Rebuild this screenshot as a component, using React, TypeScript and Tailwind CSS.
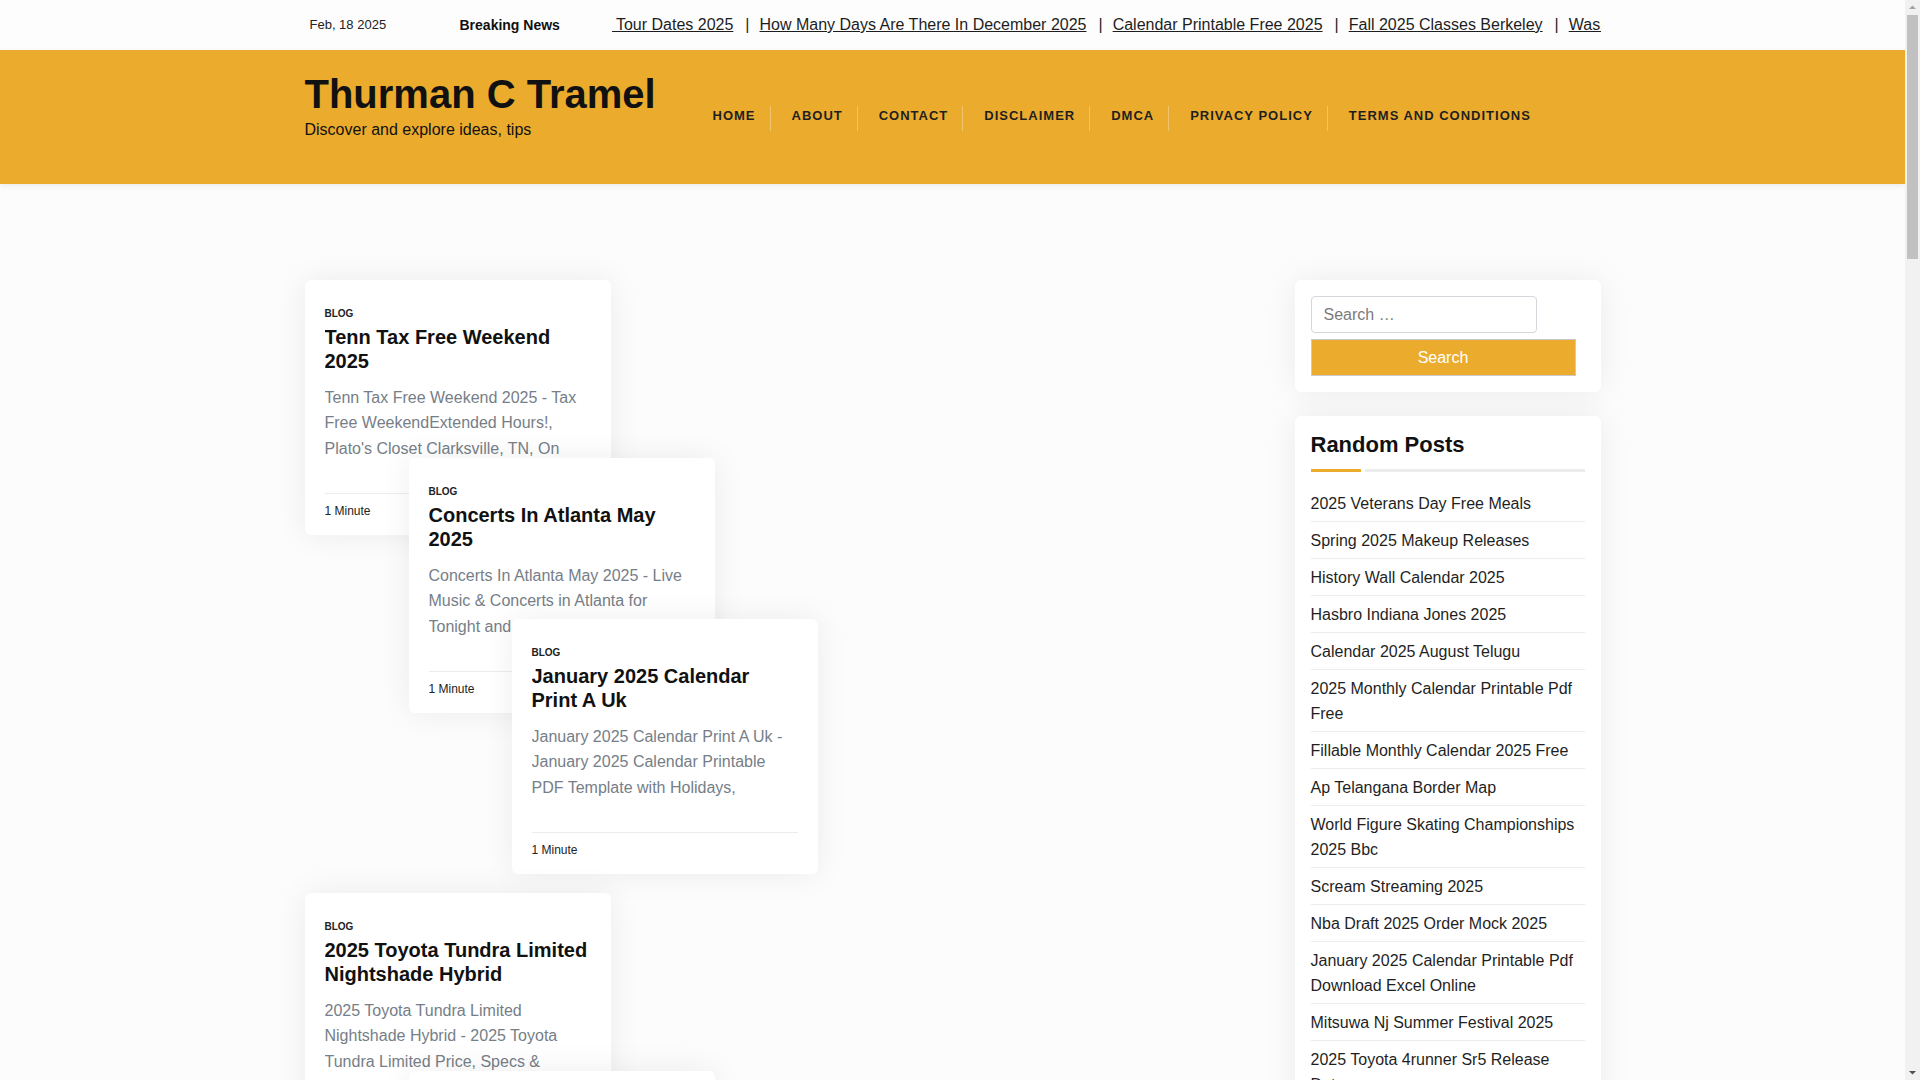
import React from "react";

const tickerItems = [
  "Tour Dates 2025",
  "How Many Days Are There In December 2025",
  "Calendar Printable Free 2025",
  "Fall 2025 Classes Berkeley",
  "Washington Nationals Schedule 2025",
  "Nfl Draft Order 2025 Round 2",
];

const navItems = ["Home", "About", "Contact", "Disclaimer", "DMCA", "Privacy Policy", "Terms and Conditions"];

const posts = [
  {
    title: "Tenn Tax Free Weekend 2025",
    excerpt:
      "Tenn Tax Free Weekend 2025 - Tax Free WeekendExtended Hours!, Plato's Closet Clarksville, TN, On August 1st through the 3rd",
  },
  {
    title: "Concerts In Atlanta May 2025",
    excerpt:
      "Concerts In Atlanta May 2025 - Live Music & Concerts in Atlanta for Tonight and This Weekend, Find tickets",
  },
  {
    title: "January 2025 Calendar Print A Uk",
    excerpt:
      "January 2025 Calendar Print A Uk - January 2025 Calendar Printable PDF Template with Holidays, Printable monthly pages",
  },
  {
    title: "2025 Toyota Tundra Limited Nightshade Hybrid",
    excerpt:
      "2025 Toyota Tundra Limited Nightshade Hybrid - 2025 Toyota Tundra Limited Price, Specs & Review, The new",
  },
  {
    title: "Spring 2025 Makeup Releases",
    excerpt: "Spring 2025 Makeup Releases - The best new beauty launches of the season, from lip tints to blush",
  },
  {
    title: "History Wall Calendar 2025",
    excerpt: "History Wall Calendar 2025 - A year of notable dates and events with printable monthly pages",
  },
  {
    title: "Hasbro Indiana Jones 2025",
    excerpt: "Hasbro Indiana Jones 2025 - Adventure Series figures, new waves and release dates for collectors",
  },
  {
    title: "Calendar 2025 August Telugu",
    excerpt: "Calendar 2025 August Telugu - Telugu calendar with festivals, panchangam and holidays for August",
  },
  {
    title: "Ap Telangana Border Map",
    excerpt: "Ap Telangana Border Map - District boundaries and roads along the Andhra Pradesh Telangana border",
  },
  {
    title: "Scream Streaming 2025",
    excerpt: "Scream Streaming 2025 - Where to watch every Scream movie online, streaming and rental options",
  },
  {
    title: "Nba Draft 2025 Order Mock 2025",
    excerpt: "Nba Draft 2025 Order Mock 2025 - Full first round mock draft with picks for all thirty teams",
  },
  {
    title: "Mitsuwa Nj Summer Festival 2025",
    excerpt: "Mitsuwa Nj Summer Festival 2025 - Food, games and performances at the Edgewater marketplace",
  },
  {
    title: "2025 Veterans Day Free Meals",
    excerpt: "2025 Veterans Day Free Meals - Restaurants offering free meals and discounts to veterans",
  },
  {
    title: "Fillable Monthly Calendar 2025 Free",
    excerpt: "Fillable Monthly Calendar 2025 Free - Editable monthly calendar templates you can type into",
  },
  {
    title: "World Figure Skating Championships 2025",
    excerpt: "World Figure Skating Championships 2025 - Schedule, results and where to watch on television",
  },
  {
    title: "2025 Monthly Calendar Printable Pdf",
    excerpt: "2025 Monthly Calendar Printable Pdf - Free printable monthly calendars with holidays in PDF",
  },
  {
    title: "Calendar Printable Free 2025",
    excerpt: "Calendar Printable Free 2025 - Yearly and monthly layouts ready to print at home or office",
  },
  {
    title: "Fall 2025 Classes Berkeley",
    excerpt: "Fall 2025 Classes Berkeley - Enrollment dates, class schedule and course catalog information",
  },
  {
    title: "Tour Dates 2025",
    excerpt: "Tour Dates 2025 - Upcoming concerts, festival appearances and ticket on sale dates this year",
  },
  {
    title: "How Many Days Are There In December",
    excerpt: "How Many Days Are There In December 2025 - Count of days, weekdays and weekends in December",
  },
  {
    title: "2025 Toyota 4runner Sr5 Release Date",
    excerpt: "2025 Toyota 4runner Sr5 Release Date - Pricing, trims and what to expect from the new model",
  },
];

const randomPosts = [
  "2025 Veterans Day Free Meals",
  "Spring 2025 Makeup Releases",
  "History Wall Calendar 2025",
  "Hasbro Indiana Jones 2025",
  "Calendar 2025 August Telugu",
  "2025 Monthly Calendar Printable Pdf Free",
  "Fillable Monthly Calendar 2025 Free",
  "Ap Telangana Border Map",
  "World Figure Skating Championships 2025 Bbc",
  "Scream Streaming 2025",
  "Nba Draft 2025 Order Mock 2025",
  "January 2025 Calendar Printable Pdf Download Excel Online",
  "Mitsuwa Nj Summer Festival 2025",
  "2025 Toyota 4runner Sr5 Release Date",
  "Tenn Tax Free Weekend 2025",
  "Concerts In Atlanta May 2025",
];

// masonry offsets: every third card starts a new cascade
const shiftClass = ["ml-0", "ml-[104px]", "ml-[207px]"];

function topClass(i: number) {
  if (i === 0) return "mt-0";
  const k = i % 3;
  if (k === 0) return "mt-[19px]";
  if (k === 1) return "-mt-[77px]";
  return "-mt-[94px]";
}

function PostCard(props: { title: string; excerpt: string; index: number }) {
  const { title, excerpt, index } = props;
  return (
    <article
      className={[
        "relative w-[306px] h-[255px] shrink-0 bg-white rounded-[6px] px-[20px] pt-[26px]",
        "shadow-[0_0_32px_rgba(0,0,0,0.07)]",
        shiftClass[index % 3],
        topClass(index),
      ].join(" ")}
    >
      <div className="text-[10px] leading-[16px] font-bold uppercase text-[#222]">Blog</div>
      <h2 className="mt-[3px] h-[48px] overflow-hidden text-[20px] leading-[24px] font-bold text-[#111]">
        {title}
      </h2>
      <p className="mt-[11.5px] h-[77px] overflow-hidden text-[16px] leading-[25.6px] text-[#767e87]">{excerpt}</p>
      <div className="mt-[31px] border-t border-[#ececec] pt-[9px] text-[12px] leading-[16px] text-[#222]">
        1 Minute
      </div>
    </article>
  );
}

// the browser's classic scrollbar, as it shows in the screenshot
function Scrollbar() {
  return (
    <div className="sticky top-0 w-[15px] h-screen shrink-0 bg-[#f1f1f1] flex flex-col items-center">
      <svg width="15" height="15" viewBox="0 0 15 15" className="shrink-0">
        <path d="M4 9h7L7.5 5.5z" fill="#a3a3a3" />
      </svg>
      <div className="w-[11px] h-[244px] bg-[#c1c1c1]" />
      <svg width="15" height="15" viewBox="0 0 15 15" className="mt-auto shrink-0">
        <path d="M4 6h7L7.5 9.5z" fill="#505050" />
      </svg>
    </div>
  );
}

export default function App() {
  return (
    <div className="flex items-start bg-[#fcfcfc] text-[#222]" style={{ fontFamily: '"Liberation Sans", Arial, sans-serif' }}>
      <div className="w-[1905px] shrink-0">
        {/* top bar */}
        <div className="bg-[#fdfdfd]">
          <div className="w-[1296px] mx-auto h-[50px] flex items-center">
            <div className="w-[155px] shrink-0 pl-[5px] text-[13px] text-[#222]">Feb, 18 2025</div>
            <div className="w-[152px] shrink-0 text-[14px] font-bold text-[#111]">Breaking News</div>
            <div className="flex-1 overflow-hidden whitespace-nowrap text-[16px] text-[#1d1d1d]">
              {tickerItems.map((t, i) => (
                <span key={t}>
                  {i > 0 && <span className="ml-[12px] mr-[10px]">|</span>}
                  <a href="#" className="underline">
                    {i === 0 ? "\u00a0" + t : t}
                  </a>
                </span>
              ))}
            </div>
          </div>
        </div>

        {/* header */}
        <header className="bg-[#ebac2e] shadow-[0_2px_6px_rgba(0,0,0,0.07)]">
          <div className="w-[1296px] mx-auto flex items-start pt-[20px] pb-[42px]">
            <div className="w-[387px] shrink-0">
              <h1 className="text-[40px] leading-[48px] font-bold text-[#111]">Thurman C Tramel</h1>
              <p className="text-[16px] leading-[24px] text-[#111]">Discover and explore ideas, tips</p>
            </div>
            <nav className="mt-[36px] flex">
              {navItems.map((n, i) => (
                <a
                  key={n}
                  href="#"
                  className={[
                    "pl-[21px] pr-[14px] pb-[5px] text-[13px] leading-[20px] font-bold uppercase tracking-[1px] text-[#1f1f1f]",
                    i > 0 ? "border-l border-[#f1c46c]" : "",
                  ].join(" ")}
                >
                  {n}
                </a>
              ))}
            </nav>
          </div>
        </header>

        {/* content */}
        <main className="w-[1296px] mx-auto pt-[96px] pb-[80px] flex justify-between items-start">
          <div className="flex flex-col items-start">
            {posts.map((p, i) => (
              <PostCard key={i} index={i} title={p.title} excerpt={p.excerpt} />
            ))}
          </div>

          <aside className="w-[306px] shrink-0 flex flex-col gap-[24px]">
            <div className="bg-white rounded-[6px] p-[16px] shadow-[0_0_32px_rgba(0,0,0,0.07)]">
              <input
                type="search"
                placeholder="Search …"
                className="block w-[226px] h-[37px] border border-[#d4d7dc] rounded-[4px] px-[12px] text-[16px] text-[#222] placeholder:text-[#7b7b7b] outline-none"
              />
              <button
                type="button"
                className="mt-[6px] block w-[265px] h-[37px] bg-[#ebac2e] border border-[#cacaca] text-white text-[16px]"
              >
                Search
              </button>
            </div>

            <div className="bg-white rounded-[6px] px-[16px] pt-[16px] pb-[10px] shadow-[0_0_32px_rgba(0,0,0,0.07)]">
              <h3 className="text-[22px] leading-[26px] font-bold text-[#111]">Random Posts</h3>
              <div className="mt-[11px] flex gap-[4px]">
                <div className="w-[50px] h-[3px] bg-[#ebac2e]" />
                <div className="flex-1 h-[3px] bg-[#ececec]" />
              </div>
              <ul className="mt-[13px]">
                {randomPosts.map((r, i) => (
                  <li
                    key={r}
                    className={[
                      "pt-[6px] pb-[5px] text-[16px] leading-[25px] text-[#1f1f1f]",
                      i < randomPosts.length - 1 ? "border-b border-[#ececec]" : "",
                    ].join(" ")}
                  >
                    <a href="#">{r}</a>
                  </li>
                ))}
              </ul>
            </div>
          </aside>
        </main>

        <footer className="bg-[#ebac2e]">
          <div className="w-[1296px] mx-auto py-[24px] text-[14px] text-[#1f1f1f]">
            Copyright © 2025 Thurman C Tramel. All rights reserved.
          </div>
        </footer>
      </div>
      <Scrollbar />
    </div>
  );
}
